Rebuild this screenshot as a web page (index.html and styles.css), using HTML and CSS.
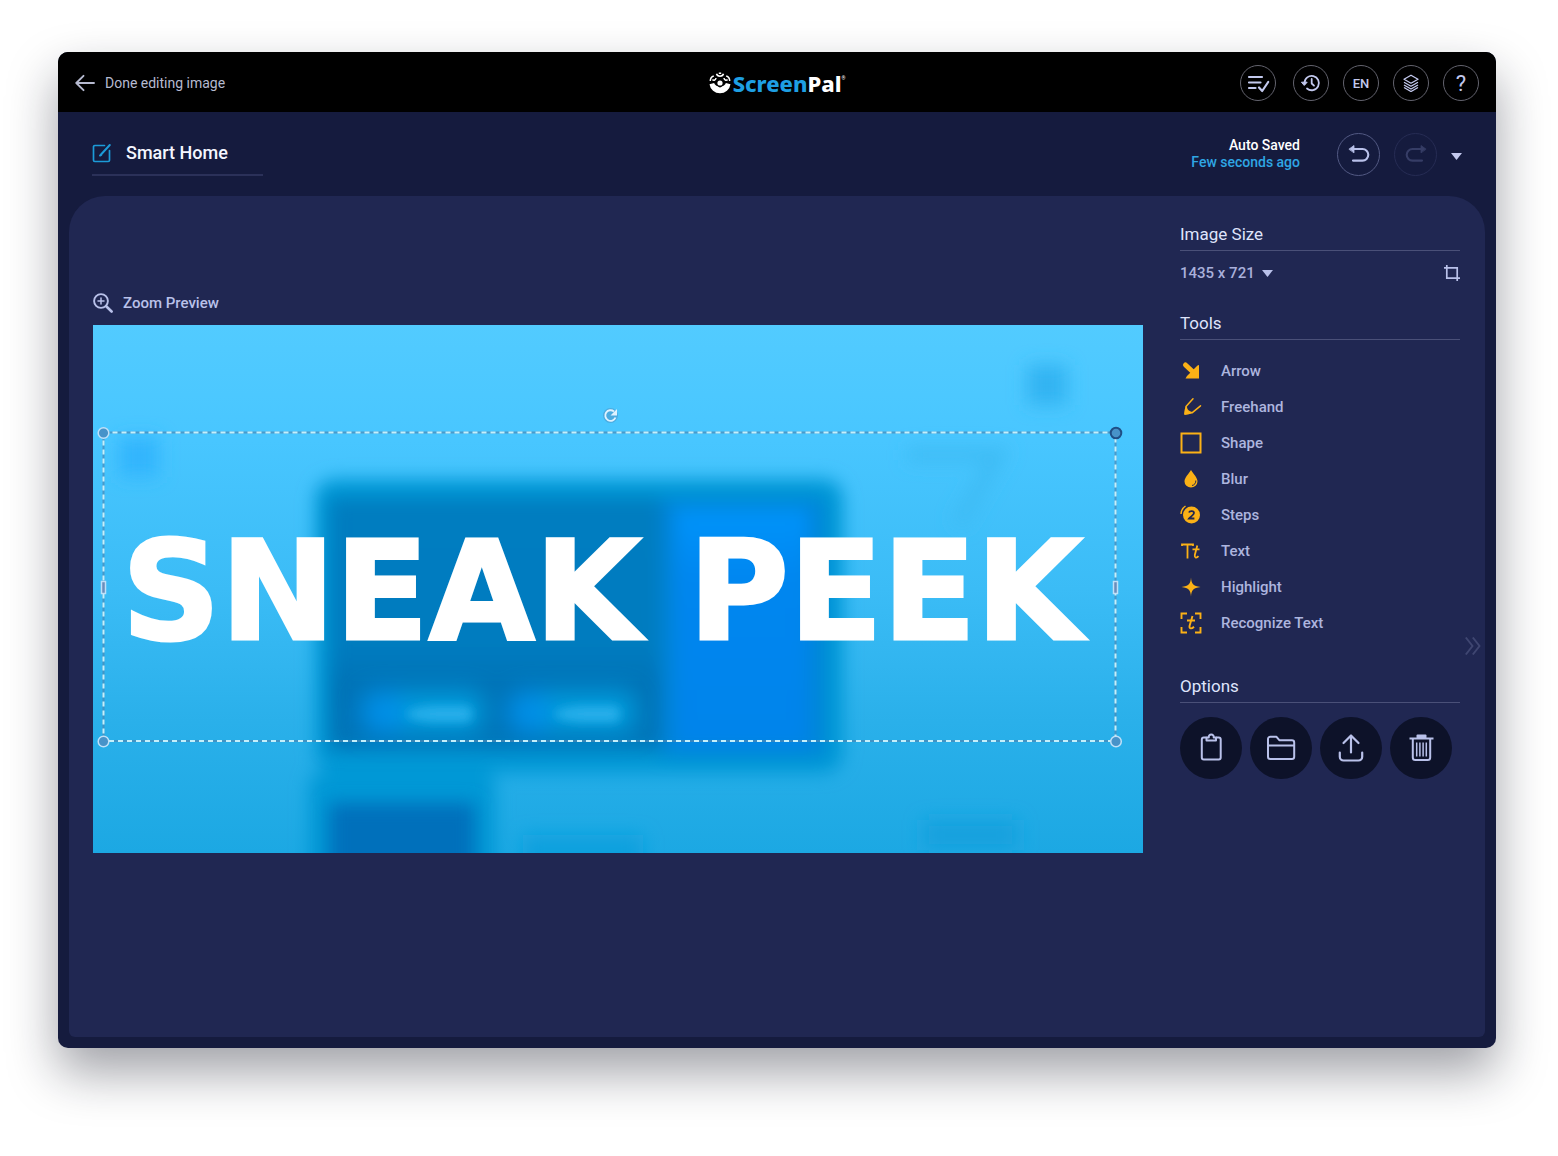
FILE: index.html
```html
<!DOCTYPE html>
<html lang="en">
<head>
<meta charset="utf-8">
<meta name="viewport" content="width=device-width, initial-scale=1">
<title>ScreenPal – Smart Home</title>
<link rel="stylesheet" href="styles.css">
</head>
<body>
<div class="window">
  <header class="topbar">
    <a class="back" href="#">
      <svg width="20" height="18" viewBox="0 0 20 18" fill="none" stroke="currentColor" stroke-width="1.9" stroke-linecap="round" stroke-linejoin="round"><path d="M19 9H1.5M8.5 1.8L1.3 9l7.2 7.2"/></svg>
      <span>Done editing image</span>
    </a>
    <a class="logo" href="#">
      <svg width="22" height="24" viewBox="0 0 22 24" fill="none">
        <path d="M.5 13.200l4.600-1.200c.8 1.800 2 2.600 3.200 3.100a3.800 3.800 0 0 0 5.400 0c1.200-.5 2.400-1.300 3.200-3.100l4.600 1.200A10.600 10.600 0 0 1 .5 13.200z" fill="#fff"/>
        <circle cx="11" cy="12" r="2.600" fill="#fff"/>
        <path d="M1.300 10C1.300 7.500 2.600 5.600 4.800 5M3.400 8.700C5 9.800 6.800 9 7 7M20.700 10C20.700 7.500 19.400 5.600 17.200 5M18.600 8.700C17 9.800 15.200 9 15 7M7.500 2.800C8.300 6 13.700 6 14.500 2.800M9.800 2.200h2.400" stroke="#fff" stroke-width="1.500"/>
      </svg>
      <span class="logo-text"><span class="logo-blue">Screen</span>Pal</span><span class="logo-mark">®</span>
    </a>
    <nav class="topbar-actions">
      <button class="round round-first" aria-label="Tasks"><svg width="24" height="20" viewBox="0 0 24 20" fill="none" stroke="currentColor" stroke-width="2.200" stroke-linecap="round" stroke-linejoin="round"><path d="M3 4h13M3 9.500h11.500M3 15h6.500M13 14.500l3.200 3.500 6-9"/></svg></button>
      <button class="round" aria-label="History"><svg width="20" height="18" viewBox="0 0 20 18" fill="none" stroke="currentColor" stroke-width="1.800" stroke-linecap="round" stroke-linejoin="round"><path d="M3.500 9A7.200 7.200 0 1 1 6 14.500"/><path d="M.8 8.200h5.400L3.500 11.200z" fill="currentColor" stroke-width="1"/><path d="M10.700 5v4.500l2.300 2.200"/></svg></button>
      <button class="round round-text">EN</button>
      <button class="round" aria-label="Layers"><svg width="18" height="18" viewBox="0 0 18 18" fill="none" stroke="currentColor" stroke-width="1.300" stroke-linejoin="round"><path d="M9 1.200l7 4-7 4-7-4zM2 8.200l7 4 7-4M2 11l7 4 7-4M2 13.500l7 4 7-4"/></svg></button>
      <button class="round round-help" aria-label="Help">?</button>
    </nav>
  </header>

  <div class="titlebar">
    <label class="project">
      <svg width="20" height="20" viewBox="0 0 20 20" fill="none" stroke="currentColor" stroke-width="1.700" stroke-linecap="round" stroke-linejoin="round"><path d="M12.500 2.500H2.800A1.300 1.300 0 0 0 1.500 3.800v13.400a1.300 1.300 0 0 0 1.300 1.300h13.400a1.300 1.300 0 0 0 1.300-1.300V7.500"/><path d="M17.800 2L9 11.500 8 12.600l1.300-.8" stroke-width="2"/></svg>
      <input class="project-name" type="text" value="Smart Home" aria-label="Project name">
    </label>
    <div class="save-state">
      <span class="save-title">Auto Saved</span>
      <span class="save-time">Few seconds ago</span>
    </div>
    <div class="history">
      <button class="undo" aria-label="Undo"><svg width="22" height="20" viewBox="0 0 22 20" fill="none" stroke="currentColor" stroke-width="2.100" stroke-linecap="round"><path d="M4 5h10.500a5.800 5.800 0 0 1 0 11.600H5"/><path d="M1.200 5L6 1.500v7z" fill="currentColor" stroke-width=".8"/></svg></button>
      <button class="undo undo-off" aria-label="Redo" disabled><svg width="22" height="20" viewBox="0 0 22 20" fill="none" stroke="currentColor" stroke-width="2.100" stroke-linecap="round"><path d="M18 5H7.500a5.800 5.800 0 0 0 0 11.600H17"/><path d="M20.800 5L16 1.500v7z" fill="currentColor" stroke-width=".8"/></svg></button>
      <button class="caret" aria-label="More history"><svg width="11" height="7" viewBox="0 0 11 7" fill="currentColor"><path d="M0 0h11L5.500 7z"/></svg></button>
    </div>
  </div>

  <main class="panel">
    <section class="stage">
      <button class="zoom">
        <svg width="20" height="20" viewBox="0 0 20 20" fill="none" stroke="currentColor" stroke-width="1.900" stroke-linecap="round"><circle cx="8" cy="8" r="6.900"/><path d="M13.200 13.200l5.400 5.300" stroke-width="2.600"/><path d="M8 5v6M5 8h6" stroke-width="1.500"/></svg>
        <span>Zoom Preview</span>
      </button>
      <div class="canvas">
        <svg class="art" viewBox="0 0 1050 528" aria-hidden="true">
          <defs>
            <linearGradient id="sky" x1="0" y1="0" x2="0" y2="1"><stop offset="0" stop-color="#52cbff"/><stop offset=".22" stop-color="#48c6ff"/><stop offset=".5" stop-color="#3bbcf6"/><stop offset=".75" stop-color="#2ab0ea"/><stop offset="1" stop-color="#1ca8e3"/></linearGradient>
            <linearGradient id="card" x1="0" y1="0" x2="0" y2="1"><stop offset="0" stop-color="#007dc0"/><stop offset=".6" stop-color="#007bbf"/><stop offset=".75" stop-color="#0072b6"/><stop offset="1" stop-color="#0074b8"/></linearGradient>
            <linearGradient id="side" x1="0" y1="0" x2="0" y2="1"><stop offset="0" stop-color="#0094fa"/><stop offset=".3" stop-color="#0086f0"/><stop offset="1" stop-color="#0084ea"/></linearGradient>
            <filter id="soft" x="-30%" y="-30%" width="160%" height="160%"><feGaussianBlur stdDeviation="9"/></filter>
            <filter id="mid" x="-40%" y="-80%" width="180%" height="260%"><feGaussianBlur stdDeviation="12"/></filter>
            <filter id="fine" x="-30%" y="-100%" width="160%" height="300%"><feGaussianBlur stdDeviation="5"/></filter>
          </defs>
          <rect width="1050" height="528" fill="url(#sky)"/>
          <g filter="url(#soft)">
            <rect x="934" y="40" width="40" height="40" fill="#32b4f2"/>
            <rect x="26" y="112" width="40" height="40" fill="#33b5fd"/>
            <path d="M815 130h90l-40 70" fill="none" stroke="#3ebbf4" stroke-width="14"/>
            <rect x="830" y="495" width="95" height="30" fill="#17a1de"/>
            <rect x="430" y="510" width="120" height="40" fill="#0fa0de"/>
            <rect x="222" y="154" width="528" height="294" rx="20" fill="#0098d6"/>
            <rect x="216" y="448" width="186" height="120" rx="12" fill="#0098d6"/>
          </g>
          <g filter="url(#soft)">
            <rect x="236" y="173" width="352" height="252" fill="url(#card)"/>
            <rect x="568" y="173" width="164" height="258" fill="#0084d8"/>
            <rect x="582" y="184" width="134" height="238" fill="url(#side)"/>
            <rect x="236" y="478" width="146" height="90" fill="#006fbb"/>
          </g>
          <g filter="url(#mid)">
            <rect x="270" y="366" width="120" height="42" rx="12" fill="#009bdb"/>
            <rect x="418" y="366" width="124" height="42" rx="12" fill="#009bdb"/>
            <circle cx="290" cy="388" r="22" fill="#008fe8"/>
            <circle cx="436" cy="388" r="22" fill="#008fe8"/>
          </g>
          <g filter="url(#fine)" fill="#27aeea">
            <path d="M312 389c10-7 24-8 36-8h22q9 0 9 8t-9 8h-22c-12 0-26-1-36-8z"/>
            <path d="M460 389c10-7 24-8 36-8h22q9 0 9 8t-9 8h-22c-12 0-26-1-36-8z"/>
          </g>
          <rect x="10.500" y="107.500" width="1012" height="308.500" fill="none" stroke="#4b87b4" stroke-opacity=".7" stroke-width="2"/>
          <rect x="10.500" y="107.500" width="1012" height="308.500" fill="none" stroke="#c4effb" stroke-width="2" stroke-dasharray="5 4"/>
          <g fill="#4793c9" stroke="#bfe0f8" stroke-width="1.500">
            <circle cx="10.500" cy="108" r="5.300"/><circle cx="10.500" cy="416.500" r="5.300"/><circle cx="1023" cy="416.500" r="5.300"/>
            <circle cx="1023" cy="108" r="5.300" stroke="#1f4f86" stroke-width="2"/>
            <rect x="8.500" y="256.500" width="4" height="12" fill="#6a8dbb"/><rect x="1020.500" y="256.500" width="4" height="12" fill="#6a8dbb"/>
          </g>
          <circle cx="517.500" cy="90.500" r="7.500" fill="#4b9fd3" opacity=".7"/>
          <path d="M522.500 92.500A5.300 5.300 0 1 1 521 86.500" fill="none" stroke="#dff2ff" stroke-width="1.900"/>
          <path d="M524 84v6.500h-6.500z" fill="#dff2ff"/>
        </svg>
        <div class="caption">SNEAK PEEK</div>
      </div>
    </section>

    <aside class="sidebar">
      <h2 class="heading">Image Size</h2>
      <div class="size-row">
        <label class="size">
          <select class="size-select" aria-label="Image size"><option>1435 x 721</option></select>
          <svg width="11" height="7" viewBox="0 0 11 7" fill="currentColor"><path d="M0 0h11L5.500 7z"/></svg>
        </label>
        <button class="plain" aria-label="Crop"><svg width="16" height="16" viewBox="0 0 16 16" fill="none" stroke="currentColor" stroke-width="1.700"><path d="M0 2.800h13.200V16M2.800 0v13.200H16"/></svg></button>
      </div>

      <h2 class="heading">Tools</h2>
      <ul class="tools">
        <li><button class="tool"><svg width="22" height="22" viewBox="0 0 22 22" fill="#fbb116"><path d="M5.500 5L13 12" fill="none" stroke="#fbb116" stroke-width="5" stroke-linecap="round"/><path d="M17.500 5.500L19 5v13.500H5.500L7 16z"/></svg><span>Arrow</span></button></li>
        <li><button class="tool"><svg width="22" height="22" viewBox="0 0 22 22" fill="none" stroke="#fbb116" stroke-width="1.500" stroke-linecap="round" stroke-linejoin="round"><path d="M13 2.800L6 10.500 5 18l7-1.200L20.500 9.800M6 10.500c.5 3 3 5.500 6 6.300"/><path d="M5.600 13.500L5 18l4.800-.8z" fill="#fbb116"/></svg><span>Freehand</span></button></li>
        <li><button class="tool"><svg width="22" height="22" viewBox="0 0 22 22" fill="none" stroke="#fbb116" stroke-width="2"><path d="M1.500 1.500h19v19h-19z"/></svg><span>Shape</span></button></li>
        <li><button class="tool"><svg width="22" height="22" viewBox="0 0 22 22"><path d="M11 2C8.500 6 4.500 9.800 4.500 13.500a6.500 6 0 0 0 13 0C17.500 9.800 13.500 6 11 2z" fill="#fbb116"/><path d="M15.800 12.500a4.500 4.500 0 0 1-3.800 5" fill="none" stroke="#202752" stroke-width="1"/></svg><span>Blur</span></button></li>
        <li><button class="tool"><svg width="22" height="22" viewBox="0 0 22 22"><circle cx="11.500" cy="11" r="8.500" fill="#fbb116"/><path d="M1 10c.2-3.500 1.500-6 4.500-8" fill="none" stroke="#fbb116" stroke-width="1.500"/><path d="M9 8.500c.6-2 5-2 5 .5 0 2-3.500 3.500-5 5.500h5.400" fill="none" stroke="#202752" stroke-width="1.800"/></svg><span>Steps</span></button></li>
        <li><button class="tool"><svg width="22" height="22" viewBox="0 0 22 22" fill="none" stroke="#fbb116" stroke-width="1.800"><path d="M2 6V4.500h11V6M7.500 4.500v14M12.500 9.300h7M17.300 5.500l-2.500 9.500c-.4 3 1.700 3.500 3.700 1.200"/></svg><span>Text</span></button></li>
        <li><button class="tool"><svg width="22" height="22" viewBox="0 0 22 22" fill="#fbb116"><path d="M11 1.500c.5 6.300 2 8.300 9.500 9.500-7.500 1.200-9 3.200-9.500 9.500-.5-6.300-2-8.300-9.500-9.500 7.500-1.200 9-3.200 9.500-9.500z"/><circle cx="11" cy="11" r="2.800"/></svg><span>Highlight</span></button></li>
        <li><button class="tool"><svg width="22" height="22" viewBox="0 0 22 22" fill="none" stroke="#fbb116" stroke-width="1.900"><path d="M1.500 7V1.500H7M15 1.500h5.500V7M20.500 15v5.500H15M7 20.500H1.500V15M7 8.500h8M12.500 4L9.600 13.800c-.6 3 1.800 3.500 4.400 1"/></svg><span>Recognize Text</span></button></li>
      </ul>

      <h2 class="heading">Options</h2>
      <div class="options">
        <button class="option" aria-label="Paste"><svg width="30" height="30" viewBox="0 0 30 30" fill="none" stroke="currentColor" stroke-width="2" stroke-linejoin="round"><path d="M10.500 4.500H7.800a2 2 0 0 0-2 2v18a2 2 0 0 0 2 2h14.900a2 2 0 0 0 2-2v-18a2 2 0 0 0-2-2H20"/><path d="M10.500 7.500v-3h2.300a2.500 2.500 0 1 1 4.900 0H20v3z"/></svg></button>
        <button class="option" aria-label="Open"><svg width="30" height="30" viewBox="0 0 30 30" fill="none" stroke="currentColor" stroke-width="2" stroke-linejoin="round"><path d="M2 12.500V6a2.300 2.300 0 0 1 2.300-2.300h6l3 3.500h12.600a2.300 2.300 0 0 1 2.300 2.300v14.300a2.300 2.300 0 0 1-2.300 2.300H4.300A2.300 2.300 0 0 1 2 23.800zH28"/></svg></button>
        <button class="option" aria-label="Upload"><svg width="30" height="30" viewBox="0 0 30 30" fill="none" stroke="currentColor" stroke-width="2.200" stroke-linecap="round" stroke-linejoin="round"><path d="M15 19.500V3M7.500 10L15 2.500l7.500 7.500M3.800 19.500v4.200a3.800 3.800 0 0 0 3.800 3.800h14.800a3.800 3.800 0 0 0 3.800-3.800v-4.200"/></svg></button>
        <button class="option" aria-label="Delete"><svg width="30" height="30" viewBox="0 0 30 30" fill="none" stroke="currentColor" stroke-width="2" stroke-linejoin="round"><path d="M3.500 5.500h24M6.800 6v18.500a2.500 2.500 0 0 0 2.500 2.500h12.400a2.500 2.500 0 0 0 2.500-2.500V6"/><path d="M11.500 4.500V2.500h8v2z" fill="currentColor"/><path d="M10.700 9.500v14M13.900 9.500v14M17.100 9.500v14M20.300 9.500v14" stroke-width="1.500"/></svg></button>
      </div>
    </aside>
    <button class="collapse" aria-label="Collapse panel"><svg width="16" height="18" viewBox="0 0 16 18" fill="none" stroke="currentColor" stroke-width="1.900"><path d="M.8.500L7.500 9 .8 17.500M7.800.500L14.500 9l-6.700 8.500"/></svg></button>
  </main>
</div>
</body>
</html>
```
FILE: styles.css
```css
* { box-sizing: border-box; }

body {
  margin: 0;
  padding: 52px 62px 108px 58px;
  background: #fff;
  font-family: Roboto, "Liberation Sans", sans-serif;
  color: #b9c1ea;
}

svg { display: block; flex: none; }

button {
  padding: 0;
  border: 0;
  background: none;
  color: inherit;
  font: inherit;
  cursor: pointer;
}

.window {
  display: flex;
  flex-direction: column;
  min-height: calc(100vh - 160px);
  border-radius: 10px;
  overflow: hidden;
  background: #151b3e;
  box-shadow: 0 24px 50px rgba(18, 20, 34, .4);
}

/* Top bar */
.topbar {
  display: grid;
  grid-template-columns: 1fr auto 1fr;
  align-items: center;
  height: 60px;
  padding: 2px 17px 0;
  background: #000;
}

.back {
  display: flex;
  align-items: center;
  gap: 10px;
  color: #b6bad0;
  font-size: 14px;
  line-height: 18px;
  text-decoration: none;
}

.logo {
  display: flex;
  align-items: center;
  color: #fff;
  text-decoration: none;
}

.logo-text {
  margin-left: 2px;
  font-family: "Noto Sans", sans-serif;
  font-size: 22px;
  font-weight: 800;
  line-height: 26px;
}

.logo-blue { color: #1e9fe3; }

.logo-mark {
  align-self: flex-start;
  padding-top: 5px;
  font-size: 5px;
  line-height: 6px;
}

.topbar-actions {
  display: flex;
  justify-content: flex-end;
  gap: 14px;
}

.round {
  display: grid;
  place-items: center;
  width: 36px;
  height: 36px;
  border: 1px solid #63636e;
  border-radius: 50%;
  color: #c3c9ee;
}

.round-first { margin-right: 3px; }
.round-text { font-size: 13px; font-weight: 500; }
.round-help { font-size: 22px; }

/* Project title and history */
.titlebar {
  display: flex;
  align-items: center;
  height: 84px;
  padding: 0 34px;
}

.project {
  display: flex;
  align-items: center;
  gap: 14px;
  width: 171px;
  height: 44px;
  margin-right: auto;
  border-bottom: 2px solid #2b3159;
  color: #1c9bd8;
}

.project-name {
  width: 130px;
  padding: 0;
  border: 0;
  outline: 0;
  background: none;
  color: #f4f6ff;
  font: 500 18px/24px Roboto, sans-serif;
}

.save-state {
  display: flex;
  flex-direction: column;
  margin-right: 37px;
  font-size: 14px;
  font-weight: 500;
  line-height: 17px;
  text-align: right;
}

.save-title { color: #fff; }
.save-time { color: #2fa6e4; }

.history {
  display: flex;
  align-items: center;
  gap: 14px;
}

.undo {
  display: grid;
  place-items: center;
  width: 43px;
  height: 43px;
  border: 1px solid #525983;
  border-radius: 50%;
}

.undo-off { border-color: #262c54; color: #363d66; }
.caret { padding-top: 5px; color: #c3c9ee; }

/* Editor panel */
.panel {
  position: relative;
  display: grid;
  grid-template-columns: minmax(0, 1fr) 280px;
  gap: 37px;
  flex: 1;
  margin: 0 11px 11px;
  padding: 0 25px 24px 24px;
  border-radius: 36px 36px 6px 6px;
  background: #202752;
}

.stage { padding-top: 95px; }

.zoom {
  display: flex;
  align-items: center;
  gap: 10px;
  height: 24px;
  margin-bottom: 10px;
  font-size: 15px;
  font-weight: 500;
}

.canvas {
  position: relative;
  overflow: hidden;
}

.art { width: 100%; height: auto; }

.caption {
  position: absolute;
  inset: 112px 42px 108px 10px;
  display: grid;
  place-items: center;
  color: #fff;
  font-family: "DejaVu Sans", sans-serif;
  font-size: 137px;
  font-weight: 700;
  line-height: 1;
  white-space: nowrap;
  -webkit-text-stroke: 3px #fff;
}

/* Sidebar */
.sidebar { padding-top: 26px; }

.heading {
  margin: 0;
  padding-bottom: 4px;
  border-bottom: 1px solid #4a5078;
  color: #dfe4fb;
  font-size: 17px;
  font-weight: 400;
  line-height: 24px;
}

.size-row {
  display: flex;
  align-items: center;
  justify-content: space-between;
  height: 44px;
  margin-bottom: 16px;
}

.size {
  display: flex;
  align-items: center;
  gap: 7px;
}

.size-select {
  appearance: none;
  padding: 0;
  border: 0;
  background: none;
  color: #a9b0db;
  font: 500 15px/20px Roboto, sans-serif;
}

.tools {
  margin: 13px 0 33px;
  padding: 0;
  list-style: none;
}

.tool {
  display: flex;
  align-items: center;
  gap: 19px;
  width: 100%;
  height: 36px;
  color: #adb5df;
  font-size: 15px;
  font-weight: 500;
}

.options {
  display: flex;
  gap: 8px;
  margin-top: 14px;
}

.option {
  display: grid;
  place-items: center;
  width: 62px;
  height: 62px;
  border-radius: 50%;
  background: #0d1229;
}

.collapse {
  position: absolute;
  top: 441px;
  right: 4px;
  color: #3f4671;
}
```
